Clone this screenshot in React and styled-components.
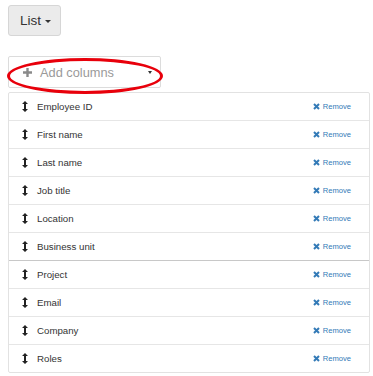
import React from "react";
import styled, { createGlobalStyle } from "styled-components";

const columns = [
  "Employee ID",
  "First name",
  "Last name",
  "Job title",
  "Location",
  "Business unit",
  "Project",
  "Email",
  "Company",
  "Roles",
];

const GlobalStyle = createGlobalStyle`
  body {
    margin: 0;
    background: #fff;
    font-family: "Liberation Sans", Arial, sans-serif;
    color: #333;
  }
`;

const MoveIcon = () => (
  <svg width="6" height="11" viewBox="0 0 6 11">
    <path d="M3 0 L6 3 L4 3 L4 8 L6 8 L3 11 L0 8 L2 8 L2 3 L0 3 Z" fill="#222" />
  </svg>
);

const RemoveIcon = () => (
  <svg width="7" height="7" viewBox="0 0 7 7">
    <path d="M1 1 L6 6 M6 1 L1 6" stroke="#337ab7" strokeWidth="2" />
  </svg>
);

const PlusIcon = () => (
  <svg width="9" height="9" viewBox="0 0 9 9">
    <path d="M3.3 0 H5.7 V3.3 H9 V5.7 H5.7 V9 H3.3 V5.7 H0 V3.3 H3.3 Z" fill="#8a8a8a" />
  </svg>
);

const App = () => {
  return (
    <Wrapper>
      <GlobalStyle />
      <ListButton>
        List <Caret />
      </ListButton>
      <AddBox>
        <PlusIcon />
        <AddText>Add columns</AddText>
        <Caret small />
        <Circle />
      </AddBox>
      <Columns>
        {columns.map((name) => (
          <Row key={name} dark={name === "Project"}>
            <MoveIcon />
            <Name>{name}</Name>
            <Remove>
              <RemoveIcon />
              <span>Remove</span>
            </Remove>
          </Row>
        ))}
      </Columns>
    </Wrapper>
  );
};

const Wrapper = styled.div`
  padding: 5px 3px 0 8px;
  display: flex;
  flex-direction: column;
  align-items: flex-start;
`;

const ListButton = styled.div`
  box-sizing: border-box;
  width: 53px;
  height: 31px;
  display: flex;
  align-items: center;
  padding-left: 11px;
  gap: 4px;
  font-size: 13.5px;
  color: #333;
  background: #ebebeb;
  border: 1px solid #d6d6d6;
  border-radius: 3px;
`;

const Caret = styled.span`
  width: 0;
  height: 0;
  border-left: ${(p) => (p.small ? 2.5 : 3)}px solid transparent;
  border-right: ${(p) => (p.small ? 2.5 : 3)}px solid transparent;
  border-top: 3px solid #333;
  margin-top: 1px;
`;

const AddBox = styled.div`
  position: relative;
  box-sizing: border-box;
  margin-top: 20px;
  width: 153px;
  height: 32px;
  display: flex;
  align-items: center;
  padding: 0 8px 0 14px;
  background: #fff;
  border: 1px solid #dcdcdc;
  border-radius: 2px;

  ${Caret} {
    margin-left: auto;
  }
`;

const AddText = styled.span`
  margin-left: 8px;
  font-size: 12.8px;
  color: #9a9a9a;
`;

const Circle = styled.div`
  position: absolute;
  left: -2px;
  top: 1px;
  width: 156px;
  height: 36px;
  box-sizing: border-box;
  border: 3px solid #e8000b;
  border-radius: 50%;
`;

const Columns = styled.div`
  margin-top: 4px;
  width: 362px;
  box-sizing: border-box;
  border: 1px solid #e2e2e2;
  border-radius: 2px;
`;

const Row = styled.div`
  height: 27px;
  display: flex;
  align-items: center;
  padding: 0 18px 0 13px;
  border-top: 1px solid ${(p) => (p.dark ? "#c8c8c8" : "#e6e6e6")};

  &:first-child {
    border-top: none;
  }
`;

const Name = styled.span`
  margin-left: 9px;
  font-size: 9.7px;
  color: #333;
`;

const Remove = styled.span`
  margin-left: auto;
  display: flex;
  align-items: center;
  gap: 3px;
  font-size: 7.6px;
  color: #337ab7;
`;

export default App;
